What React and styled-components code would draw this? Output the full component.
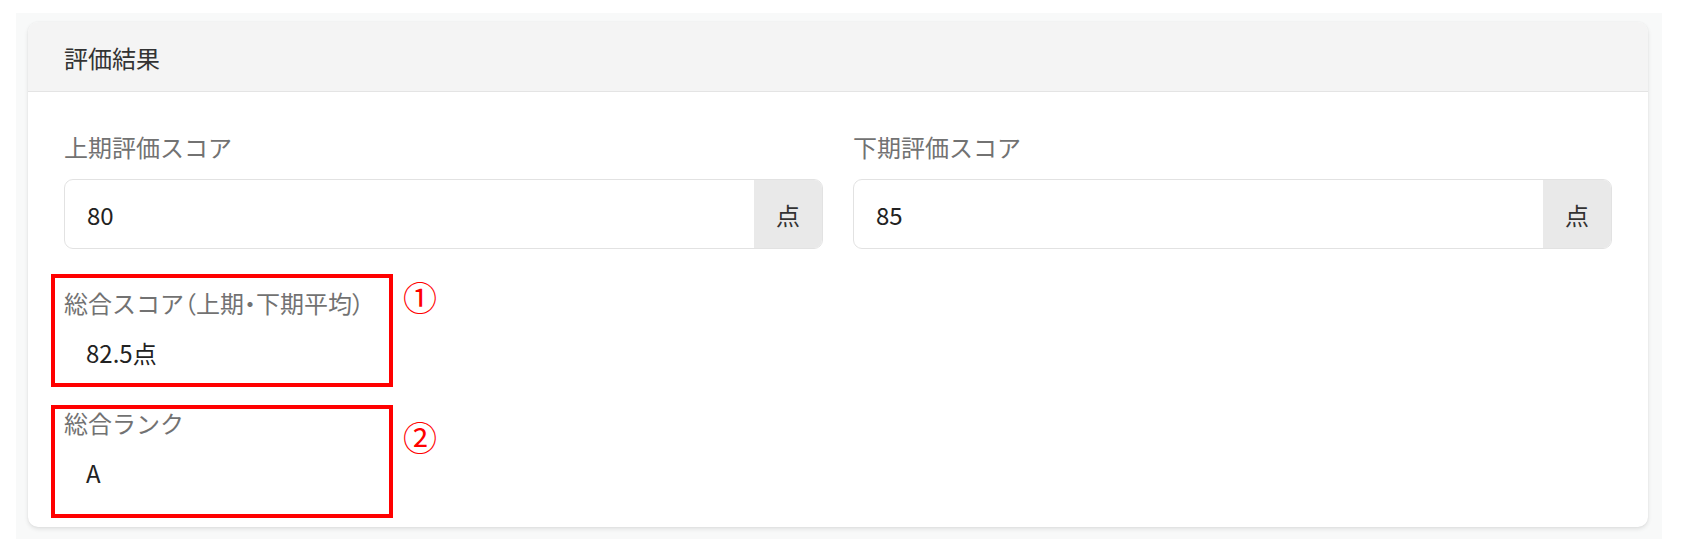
import React from "react";
import styled, { createGlobalStyle } from "styled-components";

const GlobalStyle = createGlobalStyle`
  html, body {
    margin: 0;
    padding: 0;
    background: #ffffff;
    font-family: "Noto Sans CJK JP", "Noto Sans", sans-serif;
  }
`;

export default function App() {
  return (
    <>
      <GlobalStyle />
      <Backdrop>
        <Card>
          <CardHeader>評価結果</CardHeader>
          <CardBody>
            <InputRow>
              <div>
                <Label>上期評価スコア</Label>
                <InputGroup>
                  <InputValue>80</InputValue>
                  <Addon>点</Addon>
                </InputGroup>
              </div>
              <div>
                <Label>下期評価スコア</Label>
                <InputGroup>
                  <InputValue>85</InputValue>
                  <Addon>点</Addon>
                </InputGroup>
              </div>
            </InputRow>

            <Field>
              <Label>
                総合スコア<Tight>（</Tight>上期<Tight>・</Tight>下期平均<Tight>）</Tight>
              </Label>
              <Value>82.5点</Value>
              <Highlight $top={-11} $height={113} />
              <Mark $top={-5}>①</Mark>
            </Field>

            <Field>
              <Label>総合ランク</Label>
              <Value>A</Value>
              <Highlight $top={0} $height={113} />
              <Mark $top={15}>②</Mark>
            </Field>
          </CardBody>
        </Card>
      </Backdrop>
    </>
  );
}

const Backdrop = styled.div`
  margin: 13px 20px 9px 16px;
  padding: 9px 14px 12px 12px;
  background: #f8f9f9;
`;

const Card = styled.section`
  background: #fff;
  border-radius: 10px;
  box-shadow: 0 2px 4px rgba(0, 0, 0, 0.1), 0 0 2px rgba(0, 0, 0, 0.06);
  overflow: hidden;
`;

const CardHeader = styled.div`
  padding: 18px 36px 15px;
  background: #f4f4f4;
  border-bottom: 1px solid #e4e4e4;
  font-size: 24px;
  line-height: 36px;
  color: #333;
`;

const CardBody = styled.div`
  padding: 37px 36px 36px;
`;

const InputRow = styled.div`
  display: grid;
  grid-template-columns: 1fr 1fr;
  gap: 30px;
  margin-bottom: 36px;
`;

const Label = styled.div`
  font-size: 24px;
  line-height: 36px;
  color: #727272;
  margin-bottom: 14px;
`;

// proportional punctuation for the brackets and middle dot
const Tight = styled.span`
  font-feature-settings: "palt";
`;

const InputGroup = styled.div`
  display: flex;
  height: 70px;
  box-sizing: border-box;
  border: 1px solid #e2e2e2;
  border-radius: 9px;
  overflow: hidden;
`;

const InputValue = styled.div`
  flex: 1;
  display: flex;
  align-items: center;
  padding-left: 22px;
  font-size: 24px;
  color: #222;
`;

const Addon = styled.div`
  width: 68px;
  display: flex;
  align-items: center;
  justify-content: center;
  background: #e9e9e9;
  font-size: 24px;
  color: #333;
`;

const Field = styled.div`
  position: relative;
  & + & {
    margin-top: 34px;
  }
`;

const Value = styled.div`
  font-size: 24px;
  line-height: 36px;
  padding-left: 22px;
  color: #222;
`;

const Highlight = styled.div`
  position: absolute;
  left: -13px;
  top: ${(p) => p.$top}px;
  width: 342px;
  height: ${(p) => p.$height}px;
  box-sizing: border-box;
  border: 4px solid #ff0000;
  pointer-events: none;
`;

const Mark = styled.span`
  position: absolute;
  left: 339px;
  top: ${(p) => p.$top}px;
  font-size: 34px;
  line-height: 1;
  color: #ff0000;
`;
